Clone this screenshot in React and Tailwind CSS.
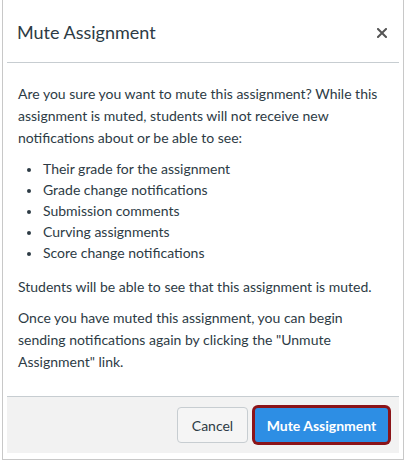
export default function App() {
  const items = [
    'Their grade for the assignment',
    'Grade change notifications',
    'Submission comments',
    'Curving assignments',
    'Score change notifications',
  ];
  return (
    <div className="w-[406px] h-[462px] bg-white" style={{ fontFamily: 'Lato, "Open Sans", sans-serif' }}>
      <div className="mx-[2px] h-[460px] border-x border-b border-[#c8c8c8] px-[4px] pb-[6px] flex flex-col text-[#2d3b45]">
        <div className="h-[63px] flex items-center justify-between pl-[10px] pr-[12px] border-b border-[#c7cdd1] pt-[3px]">
          <h1 className="text-[18px] font-normal">Mute Assignment</h1>
          <svg width="10" height="10" viewBox="0 0 10 10" className="mt-[1px]">
            <path d="M1 1L9 9M9 1L1 9" stroke="#555" strokeWidth="2" strokeLinecap="square" />
          </svg>
        </div>
        <div className="flex-1 px-[11px] pt-[20px] text-[14px] leading-[22px]">
          <p>Are you sure you want to mute this assignment? While this assignment is muted, students will not receive new notifications about or be able to see:</p>
          <ul className="mt-[9px] pl-[24px] leading-[21px] list-disc marker:text-[12px]">
            {items.map((t) => (
              <li key={t} className="pl-[1px]">{t}</li>
            ))}
          </ul>
          <p className="mt-[13px]">Students will be able to see that this assignment is muted.</p>
          <p className="mt-[9px]">Once you have muted this assignment, you can begin sending notifications again by clicking the "Unmute Assignment" link.</p>
        </div>
        <div className="h-[57px] bg-[#f2f2f2] border-t border-[#c7cdd1] flex items-center justify-end gap-[4px] pr-[8px]">
          <button className="h-[36px] w-[71px] rounded-[4px] border border-[#c7cdd1] bg-[#f5f5f5] text-[#2d3b45] text-[14px]">Cancel</button>
          <button className="h-[40px] w-[139px] px-[3px] rounded-[6px] bg-[#8b1419] flex items-center">
            <span className="h-[34px] w-full rounded-[3px] bg-[#2d8ee4] text-white text-[14px] font-bold flex items-center justify-center">Mute Assignment</span>
          </button>
        </div>
      </div>
    </div>
  );
}
